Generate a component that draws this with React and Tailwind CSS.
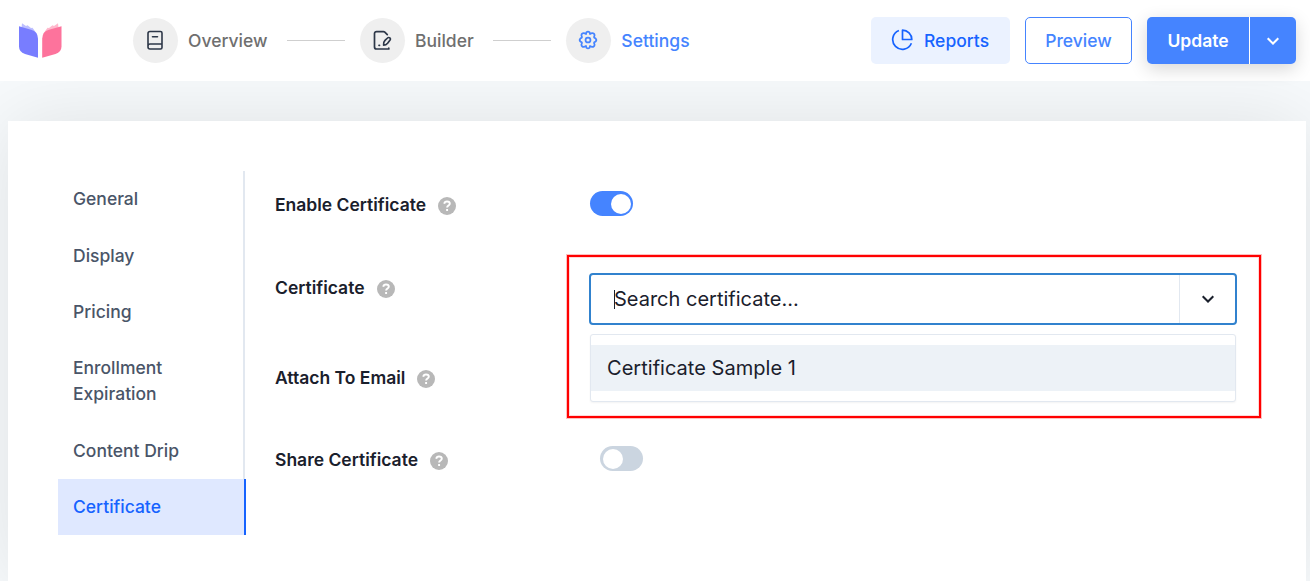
import React from "react";

const Logo = () => (
  <svg width="44" height="36" viewBox="0 0 44 36" className="-mt-[2px] shrink-0">
    <path d="M4 1.200 L8 4 L9.500 3.200 L13 6 L14.500 5.800 L19 12 L3.500 5.500 Z" fill="#bdbfff" />
    <path d="M40 1.200 L36 4 L34.500 3.200 L31 6 L29.500 5.800 L25 12 L40.500 5.500 Z" fill="#ffb9cd" />
    <path d="M1 4.200 L13 7.800 Q20 10 20 16.500 V35.800 L7 32 Q1 30 1 24.500 Z" fill="#787dff" />
    <path d="M43.500 4.200 L31 7.800 Q24.200 10 24.200 16.500 V35.800 L37.500 32 Q43.500 30 43.500 24.500 Z" fill="#fd739c" />
  </svg>
);

const BookIcon = () => (
  <svg width="24" height="24" viewBox="0 0 24 24" fill="none" stroke="currentColor" strokeWidth="1.600" strokeLinecap="round" strokeLinejoin="round">
    <path d="M5 18V5.500a2 2 0 0 1 2-2h10.500a1.500 1.500 0 0 1 1.500 1.500v14.500a1.500 1.500 0 0 1-1.500 1.500H7a2 2 0 0 1-2-2V18a2 2 0 0 1 2-2H19M9.500 8.800h5" />
  </svg>
);

const EditIcon = () => (
  <svg width="24" height="24" viewBox="0 0 24 24" fill="none" stroke="currentColor" strokeWidth="1.700" strokeLinecap="round" strokeLinejoin="round">
    <path d="M17.300 6.700 14.800 4.200a2 2 0 0 0-1.400-.6H6.500a2 2 0 0 0-2 2V19a2 2 0 0 0 2 2h12.300v-.8" />
    <path d="M13.600 17.100q-.4-2.800 1.400-4.700l2.500-2.400a1.600 1.600 0 0 1 2.400 2.300l-2.300 2.900q-1.600 1.900-4 1.900Z" />
    <path d="M9 17.300h.500" />
  </svg>
);

const gearPath =
  "M10.200 3.800Q12 2 13.800 3.800L14.200 5.500 16 4.600Q18.800 4.200 19.200 6.800L18.600 8.800 18.800 9.600 20.200 10.200Q22 12 20.200 13.800L18.800 14.400 18.600 15.200 19.200 17.200Q18.800 19.800 16 19.400L14.200 18.500 13.800 20.200Q12 22 10.200 20.200L9.800 18.500 8 19.400Q5.200 19.800 4.800 17.200L5.400 15.200 5.200 14.400 3.800 13.800Q2 12 3.800 10.200L5.200 9.600 5.400 8.800 4.800 6.800Q5.200 4.200 8 4.600L9.800 5.500Z";

const GearIcon = () => (
  <svg width="22" height="22" viewBox="0 0 24 24" fill="none" stroke="currentColor" strokeWidth="1.900" strokeLinejoin="round">
    <path d={gearPath} />
    <circle cx="12" cy="12" r="2.700" />
  </svg>
);

const PieIcon = () => (
  <svg width="22" height="22" viewBox="0 0 22 22" fill="none" stroke="currentColor" strokeWidth="1.700" strokeLinejoin="round" className="-mt-px">
    <path d="M7.900 1.500a9.700 9.700 0 1 0 12.500 12.700M11.500 1.200a9.400 9.400 0 0 1 9.300 9.300h-9.300Z" />
  </svg>
);

const Chevron = () => (
  <svg width="14" height="10" viewBox="0 0 14 10" fill="none" stroke="currentColor" strokeWidth="2">
    <path d="m1.700 2.300 5.300 5.200 5.300-5.200" />
  </svg>
);

const Help = () => (
  <span className="mt-px flex size-[18px] shrink-0 items-center justify-center rounded-full bg-[#b8b8b8] text-white">
    <svg width="10" height="12" viewBox="0 0 10 12" fill="none" stroke="currentColor" strokeWidth="1.900">
      <path d="M2.200 3.700C2.500 2.200 3.600 1.500 5 1.500c1.600 0 2.800.8 2.800 2.200 0 1.800-2.700 1.900-2.700 3.800M5.100 8.900v2" />
    </svg>
  </span>
);

const Step = ({ icon, label, active }) => (
  <div className="flex items-center gap-[10px]">
    <span className={`flex size-[45px] items-center justify-center rounded-full bg-[#efefef] pb-[2px] pr-px ${active ? "text-[#4584ff]" : "text-[#2d3748]"}`}>
      {icon}
    </span>
    <span className={active ? "pt-[2px] text-[#4584ff]" : "pt-[2px] text-[#6f6f6f]"}>{label}</span>
  </div>
);

const Line = () => <span className="ml-[19.6px] mr-[15px] h-px w-[58px] bg-[#cfcfcf]" />;

const Label = ({ children }) => (
  <div className="flex w-[315px] shrink-0 items-center gap-[12px] font-semibold leading-[26px] text-[#1a202c]">
    <span>{children}</span>
    <Help />
  </div>
);

const items = ["General", "Display", "Pricing", "Enrollment Expiration", "Content Drip"];

export default function App() {
  return (
    <div className="flex h-[581px] w-[1310px] flex-col overflow-hidden bg-[#f7fafc] font-['Inter',sans-serif] text-[17.5px] font-medium">
      <header className="relative z-10 flex h-[81px] shrink-0 items-center bg-white pl-[18px] pr-[14px]">
        <Logo />
        <nav className="ml-[71px] flex items-center">
          <Step icon={<BookIcon />} label="Overview" />
          <Line />
          <Step icon={<EditIcon />} label="Builder" />
          <Line />
          <Step icon={<GearIcon />} label="Settings" active />
        </nav>
        <div className="ml-auto flex h-[47px] items-stretch gap-[15px]">
          <button className="flex w-[139px] items-center gap-[11px] rounded-[5px] bg-[#ebf2ff] pl-5 text-[#1663ff]">
            <PieIcon />
            <span className="pt-[2px]">Reports</span>
          </button>
          <button className="w-[107px] rounded-[5px] border border-[#4584ff] pt-[2px] text-[#4584ff]">Preview</button>
          <div className="flex w-[149px] overflow-hidden rounded-[5px] bg-[#4584ff] text-white shadow-[0_5px_18px_rgba(0,0,0,0.16)]">
            <button className="w-[102px] pt-[2px] font-semibold">Update</button>
            <button className="flex flex-1 items-center justify-center border-l border-white pr-px">
              <Chevron />
            </button>
          </div>
        </div>
      </header>

      <main className="ml-2 mr-1 mt-10 flex flex-1 bg-white pl-[50px] pt-[50px] shadow-[0_0_75px_rgba(10,10,10,0.1)]">
        <aside className="mt-[0.25px] w-[188px] shrink-0 leading-[26.25px] text-[#4a5568]">
          <div className="mr-px border-r-2 border-[#e2e8f0]">
            {items.map((t) => (
              <div key={t} className="py-[15px] pl-[15px] pr-12">
                <span className="block">{t}</span>
              </div>
            ))}
          </div>
          <div className="border-r-2 border-[#1663ff] bg-[#dfe8ff] py-[15px] pl-[15px] text-[#1663ff]">Certificate</div>
        </aside>

        <section className="ml-[29px] w-[962px]">
          <div className="flex h-[66px] items-start">
            <div className="pt-[21px]">
              <Label>Enable Certificate</Label>
            </div>
            <span className="mt-5 flex h-[25px] w-[43px] items-center justify-end rounded-full bg-[#4584ff] px-[2px]">
              <span className="size-5 rounded-full bg-white" />
            </span>
          </div>

          <div className="relative flex h-[108px] items-start">
            <div className="pt-[38px]">
              <Label>Certificate</Label>
            </div>
            <div className="relative -ml-px mt-9 w-[648px] text-xl font-normal text-[#1a202c]">
              <div className="flex h-[52px] items-center rounded-[4px] border-2 border-[#3182ce] bg-white">
                <span className="ml-[23px] h-[19px] w-px bg-[#1a202c]" />
                <span className="-ml-px">Search certificate...</span>
                <span className="ml-auto flex h-full w-[56px] items-center justify-center border-l border-[#e2e8f0]">
                  <Chevron />
                </span>
              </div>
              <div className="absolute inset-x-px top-[61px] z-10 rounded-[3px] border border-[#e2e8f0] bg-white py-[10px] shadow-xs">
                <div className="flex h-[46px] items-center bg-[#edf2f7] pl-4 tracking-[0.03px]">Certificate Sample 1</div>
              </div>
              <div className="pointer-events-none absolute -left-[22px] -top-[18px] z-20 h-[163px] w-[694px] border-2 border-[#ff0000] shadow-[0_0_0_1px_rgba(255,0,0,0.25),inset_0_0_0_1px_rgba(255,0,0,0.15)]" />
            </div>
          </div>

          <div className="flex h-[66px] items-center">
            <Label>Attach To Email</Label>
          </div>

          <div className="flex h-[98px] items-center">
            <Label>Share Certificate</Label>
            <span className="-mt-[3px] ml-[10px] flex h-[25px] w-[43px] items-center rounded-full bg-[#cbd5e0] px-[3px]">
              <span className="size-5 rounded-full bg-white" />
            </span>
          </div>
        </section>
      </main>
    </div>
  );
}
